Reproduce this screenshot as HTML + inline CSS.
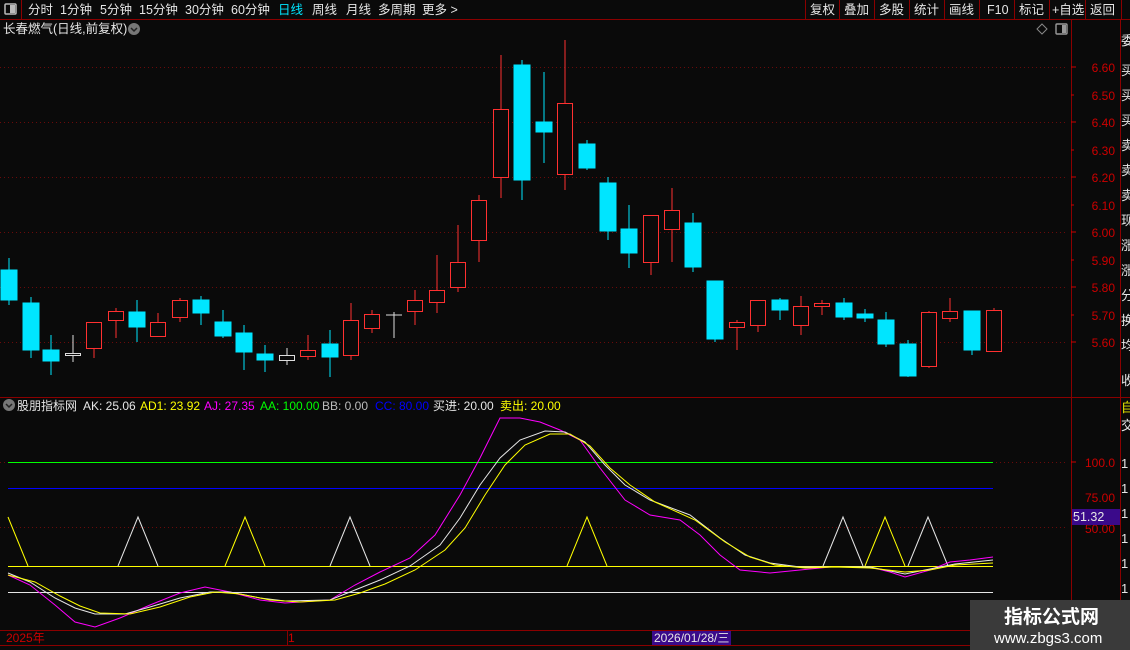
<!DOCTYPE html>
<html><head><meta charset="utf-8"><style>
html,body{margin:0;padding:0;background:#0a0a0a;width:1130px;height:650px;overflow:hidden}
svg{display:block}
text{font-family:"Liberation Sans","Noto Sans CJK SC",sans-serif}
</style></head><body>
<svg width="1130" height="650" viewBox="0 0 1130 650" xmlns="http://www.w3.org/2000/svg">
<rect width="1130" height="650" fill="#0a0a0a"/>
<!-- top bar -->
<line x1="0" y1="19.5" x2="1130" y2="19.5" stroke="#8b0000"/>
<line x1="21.5" y1="0" x2="21.5" y2="19" stroke="#8b0000"/>
<rect x="5" y="4" width="11" height="10" fill="none" stroke="#bbb" stroke-width="1.5" rx="1"/>
<rect x="10" y="5" width="5" height="8" fill="#bbb"/>
<g font-size="12.5" fill="#e6e6e6">
<text x="28" y="14">分时</text><text x="60" y="14">1分钟</text><text x="100" y="14">5分钟</text>
<text x="139" y="14">15分钟</text><text x="185" y="14">30分钟</text><text x="231" y="14">60分钟</text>
<text x="278" y="14" fill="#00e5ff">日线</text><text x="312" y="14">周线</text><text x="346" y="14">月线</text>
<text x="378" y="14">多周期</text><text x="422" y="14">更多 &gt;</text>
</g>
<g stroke="#8b0000"><line x1="805.5" y1="0" x2="805.5" y2="19"/><line x1="839.5" y1="0" x2="839.5" y2="19"/><line x1="874.5" y1="0" x2="874.5" y2="19"/><line x1="909.5" y1="0" x2="909.5" y2="19"/><line x1="944.5" y1="0" x2="944.5" y2="19"/><line x1="979.5" y1="0" x2="979.5" y2="19"/><line x1="1014.5" y1="0" x2="1014.5" y2="19"/><line x1="1049.5" y1="0" x2="1049.5" y2="19"/><line x1="1085.5" y1="0" x2="1085.5" y2="19"/><line x1="1121.5" y1="0" x2="1121.5" y2="19"/></g>
<g font-size="12.5" fill="#e6e6e6">
<text x="810" y="14">复权</text><text x="844" y="14">叠加</text><text x="879" y="14">多股</text><text x="914" y="14">统计</text><text x="949" y="14">画线</text><text x="987" y="14">F10</text><text x="1019" y="14">标记</text><text x="1052" y="14">+自选</text><text x="1090" y="14">返回</text>
</g>
<!-- title -->
<text x="3" y="33" font-size="12.5" fill="#e6e6e6">长春燃气(日线,前复权)</text>
<circle cx="134" cy="29" r="6" fill="#777"/><path d="M131 28l3 3 3-3" stroke="#222" fill="none" stroke-width="1.5"/>
<path d="M1042 24l5 5-5 5-5-5z" fill="none" stroke="#888"/>
<rect x="1056" y="24" width="11" height="10" fill="none" stroke="#999" stroke-width="1.4" rx="1"/><rect x="1062" y="25" width="4" height="8" fill="#999"/>
<!-- axes -->
<line x1="1071.5" y1="20" x2="1071.5" y2="645" stroke="#8b0000"/>
<line x1="1120.5" y1="20" x2="1120.5" y2="645" stroke="#8b0000"/>
<line x1="0" y1="397.5" x2="1130" y2="397.5" stroke="#8b0000"/>
<line x1="0" y1="630.5" x2="1130" y2="630.5" stroke="#8b0000"/>
<line x1="0" y1="645.5" x2="970" y2="645.5" stroke="#8b0000"/>
<g stroke="#6a0a0a" stroke-dasharray="1,3">
<line x1="0" y1="67.5" x2="1065" y2="67.5"/><line x1="0" y1="122.5" x2="1065" y2="122.5"/><line x1="0" y1="177.5" x2="1065" y2="177.5"/><line x1="0" y1="232.5" x2="1065" y2="232.5"/><line x1="0" y1="287.5" x2="1065" y2="287.5"/><line x1="0" y1="342.5" x2="1065" y2="342.5"/>
<line x1="0" y1="462.5" x2="1065" y2="462.5"/><line x1="0" y1="527.5" x2="1065" y2="527.5"/>
</g>
<g font-size="12" fill="#cc0000" text-anchor="end">
<text x="1115" y="72">6.60</text><text x="1115" y="100">6.50</text><text x="1115" y="127">6.40</text><text x="1115" y="155">6.30</text><text x="1115" y="182">6.20</text><text x="1115" y="210">6.10</text><text x="1115" y="237">6.00</text><text x="1115" y="265">5.90</text><text x="1115" y="292">5.80</text><text x="1115" y="320">5.70</text><text x="1115" y="347">5.60</text>
<text x="1115" y="467">100.0</text><text x="1115" y="502">75.00</text><text x="1115" y="533">50.00</text>
</g>
<g stroke="#cc0000"><line x1="1071" y1="67" x2="1076" y2="67"/><line x1="1071" y1="95" x2="1074" y2="95"/><line x1="1071" y1="122" x2="1076" y2="122"/><line x1="1071" y1="150" x2="1074" y2="150"/><line x1="1071" y1="177" x2="1076" y2="177"/><line x1="1071" y1="205" x2="1074" y2="205"/><line x1="1071" y1="232" x2="1076" y2="232"/><line x1="1071" y1="260" x2="1074" y2="260"/><line x1="1071" y1="287" x2="1076" y2="287"/><line x1="1071" y1="315" x2="1074" y2="315"/><line x1="1071" y1="342" x2="1076" y2="342"/><line x1="1071" y1="462" x2="1076" y2="462"/></g>
<rect x="1072" y="509" width="48" height="16" fill="#3a0a8a"/>
<text x="1073" y="521" font-size="12.5" fill="#e6e6e6">51.32</text>
<!-- far right strip -->
<g font-size="13" fill="#e6e6e6"><text x="1121" y="45">委</text><text x="1121" y="75">买</text><text x="1121" y="100">买</text><text x="1121" y="125">买</text><text x="1121" y="150">卖</text><text x="1121" y="175">卖</text><text x="1121" y="200">卖</text><text x="1121" y="225">现</text><text x="1121" y="250">涨</text><text x="1121" y="275">涨</text><text x="1121" y="300">分</text><text x="1121" y="325">换</text><text x="1121" y="350">均</text><text x="1121" y="385">收</text>
<text x="1121" y="412" fill="#e6e600">自</text><text x="1121" y="430">交</text>
<text x="1121" y="468">1</text><text x="1121" y="493">1</text><text x="1121" y="518">1</text><text x="1121" y="543">1</text><text x="1121" y="568">1</text><text x="1121" y="593">1</text></g>
<!-- candles -->
<g id="c" stroke-width="1">
<g stroke="#00e5ff" fill="#00e5ff">
<line x1="9" y1="258" x2="9" y2="305"/><rect x="1" y="270" width="16" height="30"/>
<line x1="31" y1="297" x2="31" y2="358"/><rect x="23" y="303" width="16" height="47"/>
<line x1="51" y1="335" x2="51" y2="375"/><rect x="43" y="350" width="16" height="11"/>
<line x1="137" y1="300" x2="137" y2="342"/><rect x="129" y="312" width="16" height="15"/>
<line x1="201" y1="296" x2="201" y2="325"/><rect x="193" y="300" width="16" height="13"/>
<line x1="223" y1="310" x2="223" y2="338"/><rect x="215" y="322" width="16" height="14"/>
<line x1="244" y1="325" x2="244" y2="370"/><rect x="236" y="333" width="16" height="19"/>
<line x1="265" y1="345" x2="265" y2="372"/><rect x="257" y="354" width="16" height="6"/>
<line x1="330" y1="330" x2="330" y2="377"/><rect x="322" y="344" width="16" height="13"/>
<line x1="522" y1="60" x2="522" y2="200"/><rect x="514" y="65" width="16" height="115"/>
<line x1="544" y1="72" x2="544" y2="163"/><rect x="536" y="122" width="16" height="10"/>
<line x1="587" y1="140" x2="587" y2="170"/><rect x="579" y="144" width="16" height="24"/>
<line x1="608" y1="177" x2="608" y2="240"/><rect x="600" y="183" width="16" height="48"/>
<line x1="629" y1="205" x2="629" y2="268"/><rect x="621" y="229" width="16" height="24"/>
<line x1="693" y1="213" x2="693" y2="272"/><rect x="685" y="223" width="16" height="44"/>
<line x1="715" y1="281" x2="715" y2="342"/><rect x="707" y="281" width="16" height="58"/>
<line x1="780" y1="298" x2="780" y2="320"/><rect x="772" y="300" width="16" height="10"/>
<line x1="844" y1="298" x2="844" y2="320"/><rect x="836" y="303" width="16" height="14"/>
<line x1="865" y1="309" x2="865" y2="322"/><rect x="857" y="314" width="16" height="4"/>
<line x1="886" y1="312" x2="886" y2="347"/><rect x="878" y="320" width="16" height="24"/>
<line x1="908" y1="340" x2="908" y2="377"/><rect x="900" y="344" width="16" height="32"/>
<line x1="972" y1="311" x2="972" y2="355"/><rect x="964" y="311" width="16" height="39"/>
</g>
<g stroke="#ff3030" fill="#0a0a0a">
<line x1="94" y1="322" x2="94" y2="358"/><rect x="86.5" y="322.5" width="15" height="26"/>
<line x1="116" y1="308" x2="116" y2="338"/><rect x="108.5" y="311.5" width="15" height="9"/>
<line x1="158" y1="313" x2="158" y2="337"/><rect x="150.5" y="322.5" width="15" height="14"/>
<line x1="180" y1="298" x2="180" y2="322"/><rect x="172.5" y="300.5" width="15" height="17"/>
<line x1="308" y1="335" x2="308" y2="360"/><rect x="300.5" y="350.5" width="15" height="6"/>
<line x1="351" y1="303" x2="351" y2="360"/><rect x="343.5" y="320.5" width="15" height="35"/>
<line x1="372" y1="310" x2="372" y2="333"/><rect x="364.5" y="314.5" width="15" height="14"/>
<line x1="415" y1="290" x2="415" y2="325"/><rect x="407.5" y="300.5" width="15" height="11"/>
<line x1="437" y1="255" x2="437" y2="313"/><rect x="429.5" y="290.5" width="15" height="12"/>
<line x1="458" y1="225" x2="458" y2="292"/><rect x="450.5" y="262.5" width="15" height="25"/>
<line x1="479" y1="195" x2="479" y2="262"/><rect x="471.5" y="200.5" width="15" height="40"/>
<line x1="501" y1="55" x2="501" y2="198"/><rect x="493.5" y="109.5" width="15" height="68"/>
<line x1="565" y1="40" x2="565" y2="190"/><rect x="557.5" y="103.5" width="15" height="71"/>
<line x1="651" y1="215" x2="651" y2="275"/><rect x="643.5" y="215.5" width="15" height="47"/>
<line x1="672" y1="188" x2="672" y2="262"/><rect x="664.5" y="210.5" width="15" height="19"/>
<line x1="737" y1="320" x2="737" y2="350"/><rect x="729.5" y="322.5" width="15" height="5"/>
<line x1="758" y1="300" x2="758" y2="332"/><rect x="750.5" y="300.5" width="15" height="25"/>
<line x1="801" y1="296" x2="801" y2="335"/><rect x="793.5" y="306.5" width="15" height="19"/>
<line x1="822" y1="300" x2="822" y2="315"/><rect x="814.5" y="303.5" width="15" height="3"/>
<line x1="929" y1="311" x2="929" y2="368"/><rect x="921.5" y="312.5" width="15" height="54"/>
<line x1="950" y1="298" x2="950" y2="322"/><rect x="942.5" y="311.5" width="15" height="7"/>
<line x1="994" y1="308" x2="994" y2="352"/><rect x="986.5" y="310.5" width="15" height="41"/>
</g>
<g stroke="#ddd" fill="#0a0a0a">
<line x1="73" y1="335" x2="73" y2="362"/><rect x="65.5" y="353.5" width="15" height="2"/>
<line x1="287" y1="348" x2="287" y2="365"/><rect x="279.5" y="355.5" width="15" height="5"/>
<line x1="394" y1="312" x2="394" y2="338"/><line x1="386" y1="315" x2="402" y2="315"/>
</g>
</g>
<!-- indicator header -->
<circle cx="9" cy="405" r="6" fill="#777"/><path d="M6 404l3 3 3-3" stroke="#222" fill="none" stroke-width="1.5"/>
<g font-size="12" >
<text x="17" y="410" fill="#e6e6e6">股朋指标网</text>
<text x="83" y="410" fill="#e6e6e6">AK: 25.06</text>
<text x="140" y="410" fill="#ffff00">AD1: 23.92</text>
<text x="204" y="410" fill="#ff00ff">AJ: 27.35</text>
<text x="260" y="410" fill="#00ff00">AA: 100.00</text>
<text x="322" y="410" fill="#bbb">BB: 0.00</text>
<text x="375" y="410" fill="#0000ff">CC: 80.00</text>
<text x="433" y="410" fill="#e6e6e6">买进: 20.00</text>
<text x="500" y="410" fill="#ffff00">卖出: 20.00</text>
</g>
<!-- indicator lines -->
<line x1="8" y1="462.5" x2="993" y2="462.5" stroke="#00ff00"/>
<line x1="8" y1="488.5" x2="993" y2="488.5" stroke="#0000ff"/>
<line x1="8" y1="566.5" x2="993" y2="566.5" stroke="#ffff00"/>
<line x1="8" y1="592.5" x2="993" y2="592.5" stroke="#e6e6e6"/>
<g fill="none" stroke-width="1">
<polyline stroke="#ffff00" points="8,517 28,566"/>
<polyline stroke="#e6e6e6" points="118,566 138,517 158,566"/>
<polyline stroke="#ffff00" points="225,566 245,517 265,566"/>
<polyline stroke="#e6e6e6" points="330,566 350,517 370,566"/>
<polyline stroke="#ffff00" points="567,566 587,517 607,566"/>
<polyline stroke="#e6e6e6" points="823,566 843,517 863,566"/>
<polyline stroke="#ffff00" points="865,566 885,517 905,566"/>
<polyline stroke="#e6e6e6" points="908,566 928,517 948,566"/>
<polyline stroke="#ff00ff" points="8,575 30,585 55,605 75,622 95,627 120,618 150,605 180,593 205,587 230,592 260,600 285,603 330,600 355,585 380,572 410,558 435,535 460,495 480,458 500,418 520,418 540,422 560,430 580,440 600,468 625,500 650,515 680,520 700,535 720,555 740,570 770,573 800,570 830,567 870,567 890,572 905,577 930,570 950,562 970,560 993,557"/>
<polyline stroke="#e6e6e6" points="8,573 30,582 55,598 75,608 95,614 125,614 150,607 180,598 210,592 230,592 260,598 285,601 330,600 355,590 380,580 410,566 440,545 460,518 480,485 500,458 520,440 545,431 565,432 585,442 605,465 625,485 650,500 690,515 720,538 745,555 770,563 800,567 830,567 870,567 905,574 930,569 955,564 993,560"/>
<polyline stroke="#ffff00" points="8,575 35,582 60,596 80,606 100,613 130,614 160,607 190,597 215,592 240,594 270,600 300,602 335,600 360,593 385,584 415,570 445,550 465,528 485,495 505,465 525,445 550,434 570,434 590,446 610,468 630,485 655,502 695,520 725,542 750,557 775,565 805,568 835,567 870,568 905,572 930,570 955,565 993,563"/>
</g>
<!-- time axis -->
<text x="6" y="642" font-size="12" fill="#cc0000">2025年</text>
<line x1="287.5" y1="630" x2="287.5" y2="645" stroke="#8b0000"/>
<text x="288" y="642" font-size="12" fill="#cc0000">1</text>
<rect x="652" y="631" width="79" height="14" fill="#3a0a8a"/>
<text x="654" y="642" font-size="12" fill="#e6e6e6">2026/01/28/三</text>
<!-- watermark -->
<rect x="970" y="600" width="160" height="50" fill="#3a3a3a"/>
<text x="1004" y="623" font-size="19" font-weight="bold" fill="#fff">指标公式网</text>
<text x="994" y="643" font-size="15" fill="#fff">www.zbgs3.com</text>
</svg>
</body></html>
